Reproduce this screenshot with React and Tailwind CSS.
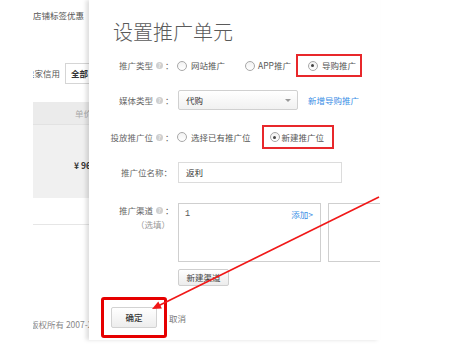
const font = { fontFamily: '"Noto Sans CJK SC", "Liberation Sans", sans-serif' };

const Radio = ({ checked }) => (
    <span className="w-[10px] h-[10px] rounded-full border border-[#a8a8a8] bg-gradient-to-b from-[#f2f2f2] to-white flex items-center justify-center shrink-0">
        {checked && <span className="w-[3px] h-[3px] rounded-full bg-[#444]" />}
    </span>
);

const Help = () => (
    <span className="w-[7px] h-[7px] rounded-full bg-[#cfcfcf] text-white text-[6px] leading-[7px] text-center ml-[3px] inline-block">?</span>
);

const Label = ({ text, help = true }) => (
    <div className="w-[83px] shrink-0 flex items-center justify-end text-[#666]">
        <span>{text}</span>
        {help && <Help />}
        <span className="ml-[2px] w-[7px]">：</span>
    </div>
);

const App = () => {
    return (
        <div className="w-[468px] h-[356px] relative bg-white overflow-hidden flex text-[8.5px]" style={font}>
            <div className="w-[33px] shrink-0" />

            {/* page behind the dialog */}
            <div className="w-[56px] shrink-0 flex flex-col overflow-hidden text-[#555] whitespace-nowrap">
                <div className="h-[30px] flex items-center">店铺标签优惠</div>
                <div className="mt-[33px] h-[21px] flex items-center">
                    <span className="ml-[-7px]">卖家信用</span>
                    <span className="ml-[5px] h-[21px] border border-[#d5d5d5] flex items-center pl-[5px] pr-[8px] text-[#333] font-bold">全部</span>
                </div>
                <div className="mt-[18px] h-[23px] bg-[#ebebeb] border-b border-[#e2e2e2] flex items-center pl-[42px] text-[#aaa]">单价</div>
                <div className="h-[73px] bg-[#f0f0f0] pl-[41px] pt-[34px] font-bold text-[#333]">¥ 96</div>
                <div className="h-[27px] border-b border-[#e6e6e6]" />
                <div className="mt-[93px] text-[#888] ml-[-3px]">版权所有 2007-2017</div>
            </div>

            {/* dialog */}
            <div className="w-[291px] h-[340px] shrink-0 relative z-10 bg-white shadow-[-3px_0_4px_rgba(0,0,0,0.13)] overflow-hidden flex flex-col pt-[20px] text-[#555] whitespace-nowrap">
                <h2 className="pl-[24px] h-[24px] leading-[24px] text-[20px] font-light text-[#5a5a5a]">设置推广单元</h2>

                <div className="mt-[10px] h-[23px] flex items-center">
                    <Label text="推广类型" />
                    <div className="ml-[5px] flex items-center">
                        <Radio />
                        <span className="ml-[4px]">网站推广</span>
                        <span className="ml-[20px]"><Radio /></span>
                        <span className="ml-[3px]">APP推广</span>
                        <div className="ml-[5px] h-[23px] border-2 border-[#e8282b] flex items-center pl-[10px] pr-[4px]">
                            <Radio checked />
                            <span className="ml-[4px]">导购推广</span>
                        </div>
                    </div>
                </div>

                <div className="mt-[13px] h-[20px] flex items-center">
                    <Label text="媒体类型" />
                    <div className="ml-[6px] w-[120px] h-[20px] border border-[#d0d0d0] rounded-[2px] bg-gradient-to-b from-white to-[#f1f1f1] flex items-center justify-between pl-[7px] pr-[6px] text-[#333]">
                        <span>代购</span>
                        <span className="w-0 h-0 border-l-[3px] border-r-[3px] border-t-[3px] border-l-transparent border-r-transparent border-t-[#999]" />
                    </div>
                    <span className="ml-[10px] text-[#3a8ee6]">新增导购推广</span>
                </div>

                <div className="mt-[15px] h-[24px] flex items-center">
                    <Label text="投放推广位" />
                    <div className="ml-[5px] flex items-center">
                        <Radio />
                        <span className="ml-[4px]">选择已有推广位</span>
                        <div className="ml-[11px] h-[24px] border-2 border-[#e8282b] flex items-center pl-[6px] pr-[8px]">
                            <Radio checked />
                            <span className="ml-[2px]">新建推广位</span>
                        </div>
                    </div>
                </div>

                <div className="mt-[13px] h-[21px] flex items-center">
                    <div className="w-[83px] shrink-0 text-right text-[#666]">推广位名称：</div>
                    <div className="ml-[6px] w-[164px] h-[21px] border border-[#dcdcdc] flex items-center pl-[7px] text-[#333]">返利</div>
                </div>

                <div className="mt-[20px] h-[59px] flex">
                    <div className="w-[83px] shrink-0 flex flex-col items-end">
                        <div className="flex items-center h-[14px]">
                            <span className="text-[#666]">推广渠道</span>
                            <Help />
                            <span className="ml-[2px] w-[7px]">：</span>
                        </div>
                        <span className="text-[#999] mr-[2px] mt-[1px]">（选填）</span>
                    </div>
                    <div className="ml-[6px] w-[143px] h-[59px] border border-[#cfcfcf] flex justify-between items-start pt-[4px] pl-[6px] pr-[7px] shrink-0">
                        <span className="text-[#555]" style={{ fontFamily: '"Liberation Mono", monospace' }}>1</span>
                        <span className="text-[#3a8ee6]">添加&gt;</span>
                    </div>
                    <div className="ml-[7px] w-[80px] h-[59px] border border-[#cfcfcf] shrink-0" />
                </div>

                <div className="mt-[7px] h-[17px] flex">
                    <div className="w-[89px] shrink-0" />
                    <div className="w-[51px] h-[17px] border border-[#cfcfcf] rounded-[2px] bg-gradient-to-b from-white to-[#ececec] flex items-center justify-center text-[#444]">新建渠道</div>
                </div>

                <div className="mt-[11px] h-[41px] flex items-center">
                    <div className="ml-[12px] w-[66px] h-[41px] border-[3px] border-[#e60000] rounded-[3px] flex items-center justify-center">
                        <div className="w-[46px] h-[21px] border border-[#d2d2d2] rounded-[2px] bg-gradient-to-b from-white to-[#ededed] flex items-center justify-center text-[#333] font-medium">确定</div>
                    </div>
                    <span className="ml-[2px] mt-[1px] text-[#777]">取消</span>
                </div>
            </div>

            {/* annotation arrow */}
            <svg className="absolute left-0 top-0 z-20" width="468" height="356" viewBox="0 0 468 356">
                <line x1="379" y1="197" x2="159" y2="305.5" stroke="#f01818" strokeWidth="1.6" />
                <polygon points="152,309 161.9,308.6 158.3,301.4" fill="#f01818" />
            </svg>
        </div>
    );
};

export default App;
